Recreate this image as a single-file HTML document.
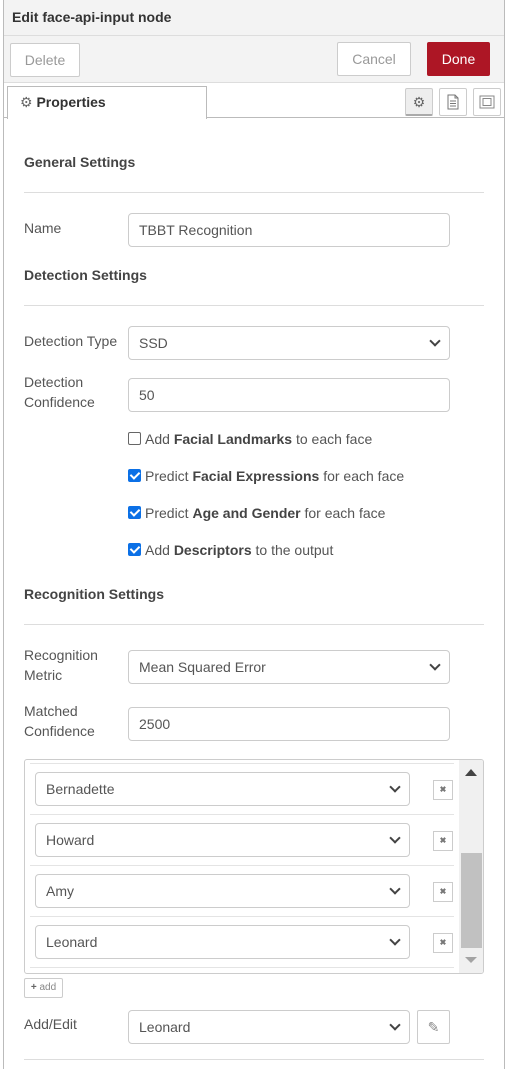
<!DOCTYPE html>
<html><head><style>
*{box-sizing:border-box;margin:0;padding:0}
body{width:508px;height:1069px;overflow:hidden;background:#fff;font-family:"Liberation Sans",Arial,sans-serif;font-size:14px;color:#555;position:relative}
.a{position:absolute}
.frame{left:3px;top:0;width:502px;height:1069px;border-left:1px solid #bbb;border-right:1px solid #bbb}
.hdr{left:4px;top:0;width:500px;height:83px;background:#f3f3f3;border-bottom:1px solid #ddd}
.btn{position:absolute;border:1px solid #ccc;background:#fff;color:#999;text-align:center;font-size:14px;border-radius:2px}
.h{font-weight:bold;color:#444;font-size:14px}
.line{position:absolute;left:24px;width:460px;height:1px;background:#ddd}
.inp{position:absolute;border:1px solid #ccc;border-radius:4px;background:#fff;padding-left:10px;color:#555;font-size:14px}
.chev{position:absolute;right:10px;top:50%;width:8px;height:8px;border-right:2px solid #444;border-bottom:2px solid #444;transform:translateY(-75%) rotate(45deg)}
.cb{position:absolute;left:128px;width:13px;height:13px;border-radius:2px;background:#0b70e6}
.cb.off{background:#fff;border:1px solid #666}
.cb:not(.off)::after{content:"";position:absolute;left:4px;top:1px;width:4px;height:7px;border-right:2px solid #fff;border-bottom:2px solid #fff;transform:rotate(45deg)}
.ct{position:absolute;left:145px;color:#555}
.ct b{color:#444}
.x{position:absolute;left:433px;width:20px;height:20px;border:1px solid #ccc;font-size:8px;font-weight:bold;text-align:center;line-height:18px;color:#777}
.sep{position:absolute;left:30px;width:424px;height:1px;background:#e4e4e4}
</style></head><body>
<div class="a hdr"></div>
<div class="a frame"></div>
<div class="a h" style="left:12px;top:9px;color:#333">Edit face-api-input node</div>
<div class="a" style="left:4px;top:35px;width:500px;height:1px;background:#ddd"></div>
<div class="btn" style="left:10px;top:43px;width:70px;height:34px;line-height:32px">Delete</div>
<div class="btn" style="left:337px;top:42px;width:74px;height:34px;line-height:32px">Cancel</div>
<div class="btn" style="left:427px;top:42px;width:63px;height:34px;line-height:32px;background:#ad1625;border-color:#ad1625;color:#fff">Done</div>
<div class="a" style="left:4px;top:83px;width:500px;height:35px;background:#fff;border-bottom:1px solid #bbb"></div>
<div class="a" style="left:7px;top:86px;width:200px;height:33px;border:1px solid #bbb;border-bottom:none;background:#fff;padding:7px 0 0 12px"><span style="color:#666">&#9881;</span> <b style="color:#333">Properties</b></div>
<div class="btn" style="left:405px;top:88px;width:28px;height:28px;background:#eee;border-bottom:2px solid #aaa;color:#666;line-height:26px">&#9881;</div>
<div class="btn" style="left:439px;top:88px;width:28px;height:28px">
<svg width="14" height="16" style="margin-top:5px" viewBox="0 0 14 16"><path d="M2 1h7l3 3v11H2z M9 1v3h3 M4 7h6 M4 9.5h6 M4 12h6" fill="none" stroke="#777"/></svg></div>
<div class="btn" style="left:473px;top:88px;width:28px;height:28px">
<svg width="18" height="16" style="margin-top:5px" viewBox="0 0 18 16"><rect x="2" y="2" width="14" height="12" fill="none" stroke="#888"/><rect x="5" y="4.5" width="8" height="7" fill="none" stroke="#888"/></svg></div>

<div class="a h" style="left:24px;top:154px">General Settings</div>
<div class="line" style="top:192px"></div>
<div class="a" style="left:24px;top:220px">Name</div>
<div class="inp" style="left:128px;top:213px;width:322px;height:34px;line-height:32px">TBBT Recognition</div>

<div class="a h" style="left:24px;top:267px">Detection Settings</div>
<div class="line" style="top:305px"></div>
<div class="a" style="left:24px;top:333px">Detection Type</div>
<div class="inp" style="left:128px;top:326px;width:322px;height:34px;line-height:32px">SSD<span class="chev"></span></div>
<div class="a" style="left:24px;top:372px;line-height:20px">Detection<br>Confidence</div>
<div class="inp" style="left:128px;top:378px;width:322px;height:34px;line-height:32px">50</div>

<div class="cb off" style="top:432px"></div><div class="ct" style="top:431px">Add <b>Facial Landmarks</b> to each face</div>
<div class="cb" style="top:469px"></div><div class="ct" style="top:468px">Predict <b>Facial Expressions</b> for each face</div>
<div class="cb" style="top:506px"></div><div class="ct" style="top:505px">Predict <b>Age and Gender</b> for each face</div>
<div class="cb" style="top:543px"></div><div class="ct" style="top:542px">Add <b>Descriptors</b> to the output</div>

<div class="a h" style="left:24px;top:586px">Recognition Settings</div>
<div class="line" style="top:624px"></div>
<div class="a" style="left:24px;top:645px;line-height:20px">Recognition<br>Metric</div>
<div class="inp" style="left:128px;top:650px;width:322px;height:34px;line-height:32px">Mean Squared Error<span class="chev"></span></div>
<div class="a" style="left:24px;top:701px;line-height:20px">Matched<br>Confidence</div>
<div class="inp" style="left:128px;top:707px;width:322px;height:34px;line-height:32px">2500</div>

<div class="a" style="left:24px;top:759px;width:460px;height:215px;border:1px solid #ccc;border-radius:3px;overflow:hidden">
 <div class="a" style="left:434px;top:0;width:25px;height:213px;background:#f0f0f0"></div>
 <div class="a" style="left:436px;top:93px;width:21px;height:95px;background:#c1c1c1"></div>
 <div class="a" style="left:440px;top:9px;width:0;height:0;border-left:6px solid transparent;border-right:6px solid transparent;border-bottom:7px solid #444"></div>
 <div class="a" style="left:440px;top:197px;width:0;height:0;border-left:6px solid transparent;border-right:6px solid transparent;border-top:6px solid #a3a3a3"></div>
</div>
<div class="sep" style="top:763px"></div>
<div class="inp" style="left:35px;top:772px;width:375px;height:34px;line-height:32px">Bernadette<span class="chev"></span></div>
<div class="x" style="top:780px">&#x2716;</div>
<div class="sep" style="top:814px"></div>
<div class="inp" style="left:35px;top:823px;width:375px;height:34px;line-height:32px">Howard<span class="chev"></span></div>
<div class="x" style="top:831px">&#x2716;</div>
<div class="sep" style="top:865px"></div>
<div class="inp" style="left:35px;top:874px;width:375px;height:34px;line-height:32px">Amy<span class="chev"></span></div>
<div class="x" style="top:882px">&#x2716;</div>
<div class="sep" style="top:916px"></div>
<div class="inp" style="left:35px;top:925px;width:375px;height:34px;line-height:32px">Leonard<span class="chev"></span></div>
<div class="x" style="top:933px">&#x2716;</div>
<div class="sep" style="top:967px"></div>

<div class="btn" style="left:24px;top:978px;width:39px;height:20px;font-size:10px;line-height:18px;color:#888"><b style="color:#666">+</b> add</div>
<div class="a" style="left:24px;top:1016px">Add/Edit</div>
<div class="inp" style="left:128px;top:1010px;width:282px;height:34px;line-height:32px">Leonard<span class="chev"></span></div>
<div class="btn" style="left:417px;top:1010px;width:33px;height:34px;line-height:32px;color:#888">&#9998;</div>
<div class="line" style="top:1059px"></div>
</body></html>
